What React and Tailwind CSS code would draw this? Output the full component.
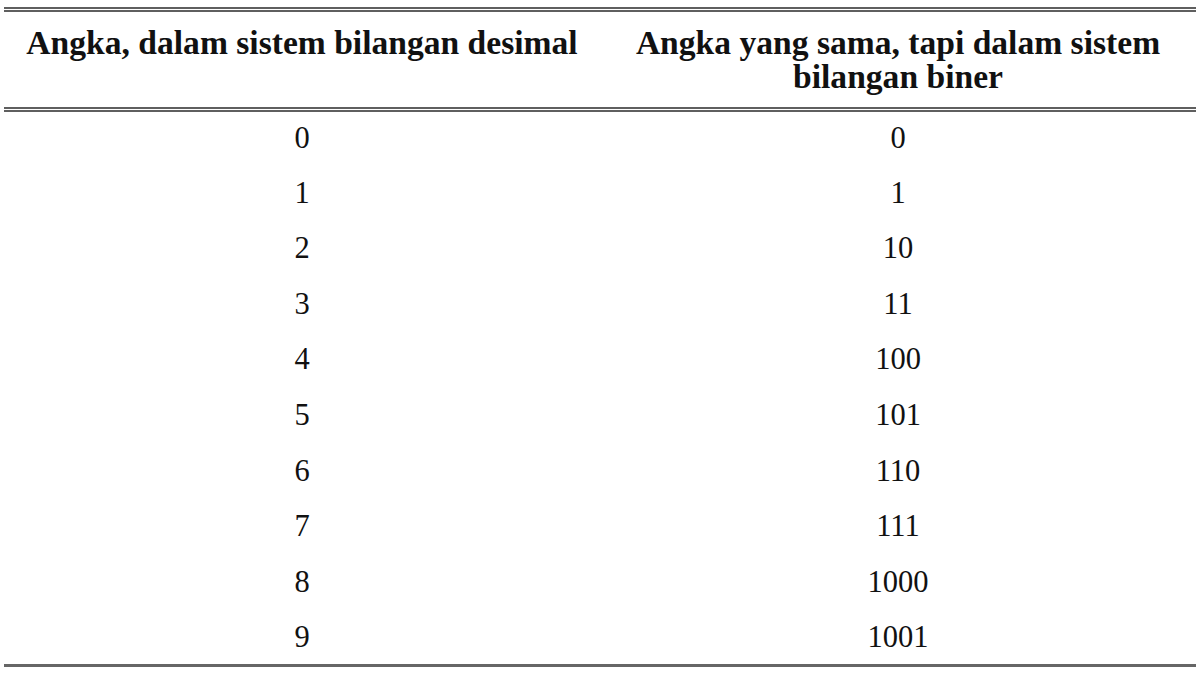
import React from 'react';

const rows = [
  ['0', '0'],
  ['1', '1'],
  ['2', '10'],
  ['3', '11'],
  ['4', '100'],
  ['5', '101'],
  ['6', '110'],
  ['7', '111'],
  ['8', '1000'],
  ['9', '1001'],
];

const App = () => {
  return (
    <div className="w-[1200px] h-[675px] bg-white px-[4px] pt-[7px] font-['Liberation_Serif','Times_New_Roman',serif] text-[#111]">
      <table className="w-full border-collapse table-fixed">
        <thead>
          <tr className="border-y-[5px] border-double border-[#5f5f5f]">
            <th className="w-1/2 align-top text-center font-bold text-[33.6px] leading-[34px] pt-[14px] pb-[13px] px-1">
              Angka, dalam sistem bilangan desimal
            </th>
            <th className="w-1/2 align-top text-center font-bold text-[33.6px] leading-[34px] pt-[14px] pb-[13px] px-1">
              Angka yang sama, tapi dalam sistem
              <br />
              bilangan biner
            </th>
          </tr>
        </thead>
        <tbody className="border-b-[3px] border-[#666]">
          {rows.map(([dec, bin]) => (
            <tr key={dec} className="h-[55.6px]">
              <td className="p-0 text-center align-middle text-[30.5px] leading-none">{dec}</td>
              <td className="p-0 text-center align-middle text-[30.5px] leading-none">{bin}</td>
            </tr>
          ))}
        </tbody>
      </table>
    </div>
  );
};

export default App;
